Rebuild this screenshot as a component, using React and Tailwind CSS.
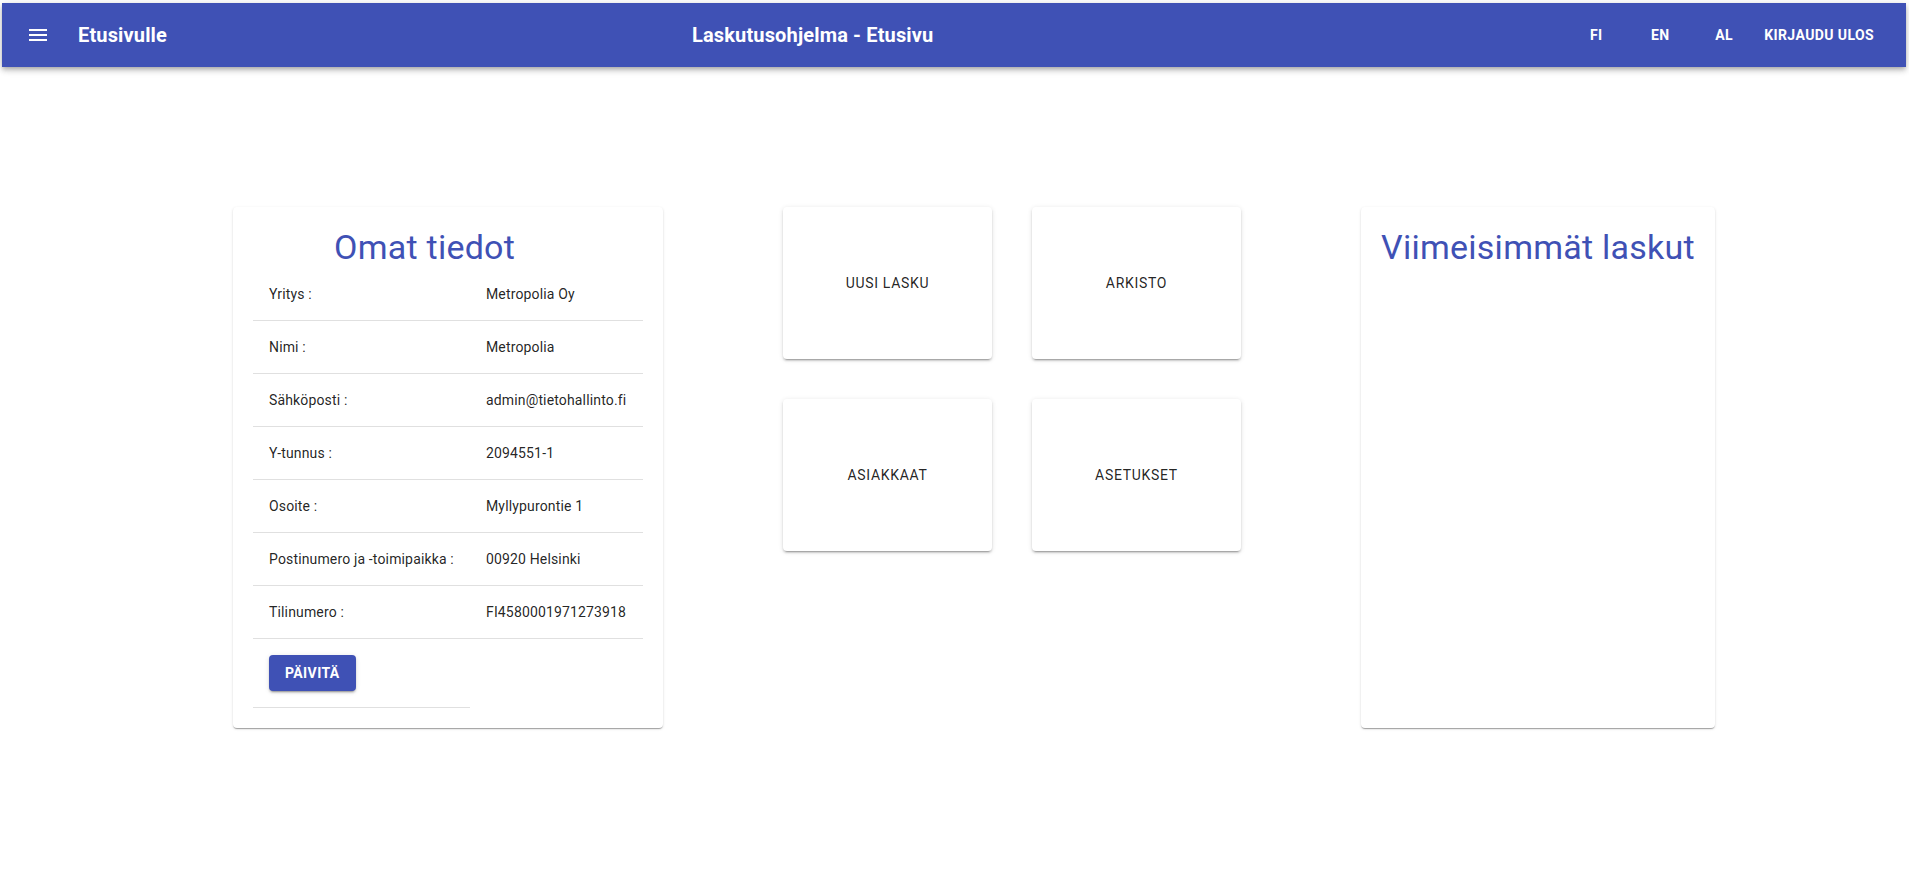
import React from "react";

const rows = [
  ["Yritys :", "Metropolia Oy"],
  ["Nimi :", "Metropolia"],
  ["Sähköposti :", "admin@tietohallinto.fi"],
  ["Y-tunnus :", "2094551-1"],
  ["Osoite :", "Myllypurontie 1"],
  ["Postinumero ja -toimipaikka :", "00920 Helsinki"],
  ["Tilinumero :", "FI4580001971273918"],
];

const tiles = ["UUSI LASKU", "ARKISTO", "ASIAKKAAT", "ASETUKSET"];

export default function App() {
  return (
    <div className="min-h-[896px] bg-white font-['Roboto',sans-serif] text-[rgba(0,0,0,0.87)]">
      <div className="pt-[3px] pl-[2px] pr-[3px]">
        <header className="h-[64px] bg-[#3f51b5] text-white flex items-center pl-[12px] pr-[24px] shadow-[0px_2px_4px_-1px_rgba(0,0,0,0.2),0px_4px_5px_0px_rgba(0,0,0,0.14),0px_1px_10px_0px_rgba(0,0,0,0.12)]">
          <button className="w-[48px] h-[48px] flex items-center justify-center mr-[16px]">
            <svg width="24" height="24" viewBox="0 0 24 24" fill="white">
              <path d="M3 18h18v-2H3v2zm0-5h18v-2H3v2zm0-7v2h18V6H3z" />
            </svg>
          </button>
          <div className="w-[614px] text-[20px] font-bold leading-[32px] tracking-[0.0075em]">Etusivulle</div>
          <div className="text-[20px] font-bold leading-[32px] tracking-[0.0075em]">Laskutusohjelma - Etusivu</div>
          <div className="flex-1" />
          <div className="flex items-center">
            {["FI", "EN", "AL", "KIRJAUDU ULOS"].map((t) => (
              <button
                key={t}
                className="min-w-[64px] px-[8px] py-[6px] text-[14px] font-bold leading-[24px] tracking-[0.02857em] uppercase text-white text-center"
              >
                {t}
              </button>
            ))}
          </div>
        </header>
      </div>

      <main className="flex items-start pl-[233px] pt-[140px] gap-[120px]">
        <section className="w-[430px] h-[521px] bg-white rounded-[4px] px-[20px] pt-[19px] shadow-[0px_2px_1px_-1px_rgba(0,0,0,0.2),0px_1px_1px_0px_rgba(0,0,0,0.14),0px_1px_3px_0px_rgba(0,0,0,0.12)]">
          <h2 className="pl-[81px] text-[34px] leading-[42px] tracking-[0.00735em] text-[#3f51b5] font-normal">Omat tiedot</h2>
          <table className="w-[390px] border-collapse text-[14px] leading-[20px]">
            <tbody>
              {rows.map(([k, v]) => (
                <tr key={k}>
                  <td className="w-[217px] p-[16px] border-b border-[#e0e0e0] tracking-[0.01071em]">{k}</td>
                  <td className="p-[16px] border-b border-[#e0e0e0] tracking-[0.01071em]">{v}</td>
                </tr>
              ))}
              <tr>
                <td className="p-[16px] border-b border-[#e0e0e0]">
                  <button className="h-[36px] px-[16px] rounded-[4px] bg-[#3f51b5] text-white text-[14px] font-bold tracking-[0.02857em] shadow-[0px_3px_1px_-2px_rgba(0,0,0,0.2),0px_2px_2px_0px_rgba(0,0,0,0.14),0px_1px_5px_0px_rgba(0,0,0,0.12)]">
                    PÄIVITÄ
                  </button>
                </td>
                <td />
              </tr>
            </tbody>
          </table>
        </section>

        <section className="grid grid-cols-[209px_209px] gap-[40px]">
          {tiles.map((t) => (
            <div
              key={t}
              className="h-[152px] bg-white rounded-[4px] flex items-center justify-center text-[14px] font-normal tracking-[0.05em] shadow-[0px_3px_1px_-2px_rgba(0,0,0,0.2),0px_2px_2px_0px_rgba(0,0,0,0.14),0px_1px_5px_0px_rgba(0,0,0,0.12)]"
            >
              {t}
            </div>
          ))}
        </section>

        <section className="w-[354px] h-[521px] bg-white rounded-[4px] pt-[19px] shadow-[0px_2px_1px_-1px_rgba(0,0,0,0.2),0px_1px_1px_0px_rgba(0,0,0,0.14),0px_1px_3px_0px_rgba(0,0,0,0.12)]">
          <h2 className="text-center text-[34px] leading-[42px] tracking-[0.00735em] text-[#3f51b5] font-normal">Viimeisimmät laskut</h2>
        </section>
      </main>
    </div>
  );
}
